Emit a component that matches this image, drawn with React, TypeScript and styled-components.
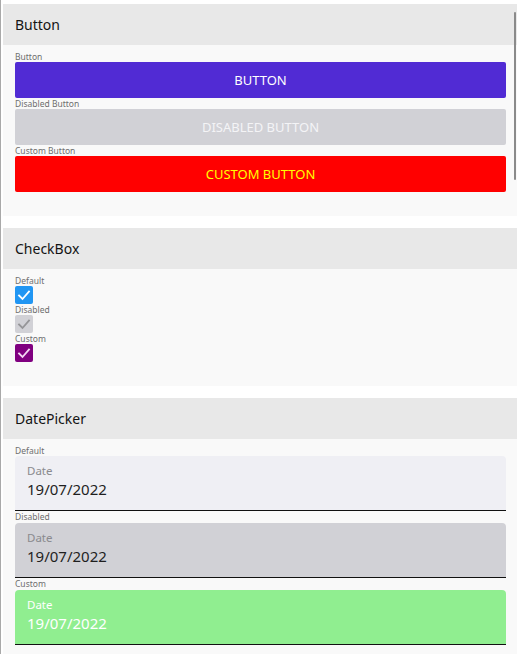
import type { FC, ReactNode } from 'react'
import styled, { createGlobalStyle } from 'styled-components'

const GlobalStyle = createGlobalStyle`
	html, body {
		margin: 0;
		padding: 0;
		background: #ffffff;
	}
	body {
		font-family: 'Noto Sans', 'Open Sans', sans-serif;
		color: #1f1f1f;
	}
`

const CheckMark: FC<{ color: string }> = ({ color }) => (
	<svg width="18" height="18" viewBox="0 0 18 18">
		<polyline
			points="4,9.5 7.5,13 14,5.5"
			fill="none"
			stroke={color}
			strokeWidth="1.8"
			strokeLinecap="square"
		/>
	</svg>
)

const Section: FC<{ title: string; bottom: number; children: ReactNode }> = ({
	title,
	bottom,
	children,
}) => (
	<Card>
		<Header>{title}</Header>
		<Content $bottom={bottom}>{children}</Content>
	</Card>
)

interface DateFieldProps {
	bg: string
	labelColor: string
	valueColor: string
}
const DateField: FC<DateFieldProps> = ({ bg, labelColor, valueColor }) => (
	<Field $bg={bg}>
		<FieldLabel $color={labelColor}>Date</FieldLabel>
		<FieldValue $color={valueColor}>19/07/2022</FieldValue>
	</Field>
)

export default function App() {
	return (
		<>
			<GlobalStyle />
			<Page>
				<Section title="Button" bottom={24}>
					<Caption>Button</Caption>
					<Btn $bg="#512bd4" $fg="#ffffff">
						BUTTON
					</Btn>
					<Caption>Disabled Button</Caption>
					<Btn $bg="#d1d1d6" $fg="#f4f4f6">
						DISABLED BUTTON
					</Btn>
					<Caption>Custom Button</Caption>
					<Btn $bg="#ff0000" $fg="#ffff00">
						CUSTOM BUTTON
					</Btn>
				</Section>

				<Section title="CheckBox" bottom={24}>
					<Caption>Default</Caption>
					<Box $bg="#2196f3">
						<CheckMark color="#ffffff" />
					</Box>
					<Caption>Disabled</Caption>
					<Box $bg="#d1d1d6">
						<CheckMark color="#959598" />
					</Box>
					<Caption>Custom</Caption>
					<Box $bg="#800080">
						<CheckMark color="#f3d6f3" />
					</Box>
				</Section>

				<Section title="DatePicker" bottom={20}>
					<Caption>Default</Caption>
					<DateField bg="#efeff4" labelColor="#8a8a8e" valueColor="#1f1f1f" />
					<Caption $h={12}>Disabled</Caption>
					<DateField bg="#d1d1d6" labelColor="#8a8a8e" valueColor="#1f1f1f" />
					<Caption $h={12}>Custom</Caption>
					<DateField bg="#90ee90" labelColor="#ffffff" valueColor="#ffffff" />
				</Section>
				<Scrollbar />
			</Page>
		</>
	)
}

const Page = styled.div`
	position: relative;
	display: flex;
	flex-direction: column;
	gap: 12px;
	padding: 4px 3px 20px 2px;
	border-left: 1px solid #a9a9a9;
	min-height: 654px;
	box-sizing: border-box;
`

const Scrollbar = styled.div`
	position: absolute;
	top: 12px;
	right: 4px;
	width: 2px;
	height: 168px;
	background: #8a8a8a;
	border-radius: 1px;
`

const Card = styled.section`
	background: #f9f9f9;
	display: flex;
	flex-direction: column;
`

const Header = styled.div`
	height: 41px;
	display: flex;
	align-items: center;
	padding-left: 12px;
	background: #e8e8e8;
	font-size: 14px;
	color: #141414;
`

const Content = styled.div<{ $bottom: number }>`
	display: flex;
	flex-direction: column;
	align-items: stretch;
	padding: 6px 11px ${({ $bottom }) => $bottom}px 12px;
`

const Caption = styled.div<{ $h?: number }>`
	height: ${({ $h }) => $h ?? 11}px;
	line-height: 11px;
	font-size: 8.5px;
	color: #6e6e6e;
	white-space: nowrap;
`

const Btn = styled.div<{ $bg: string; $fg: string }>`
	height: 36px;
	display: flex;
	align-items: center;
	justify-content: center;
	background: ${({ $bg }) => $bg};
	color: ${({ $fg }) => $fg};
	font-size: 13px;
	border-radius: 2px;
`

const Box = styled.div<{ $bg: string }>`
	width: 18px;
	height: 18px;
	background: ${({ $bg }) => $bg};
	border-radius: 2px;
	display: flex;
	align-items: center;
	justify-content: center;
`

const Field = styled.div<{ $bg: string }>`
	box-sizing: border-box;
	height: 55px;
	background: ${({ $bg }) => $bg};
	border-radius: 4px 4px 0 0;
	border-bottom: 1.5px solid #111111;
	display: flex;
	flex-direction: column;
	padding: 7px 12px 0;
`

const FieldLabel = styled.div<{ $color: string }>`
	font-size: 11.5px;
	line-height: 15px;
	color: ${({ $color }) => $color};
`

const FieldValue = styled.div<{ $color: string }>`
	font-size: 15px;
	line-height: 22px;
	color: ${({ $color }) => $color};
`
